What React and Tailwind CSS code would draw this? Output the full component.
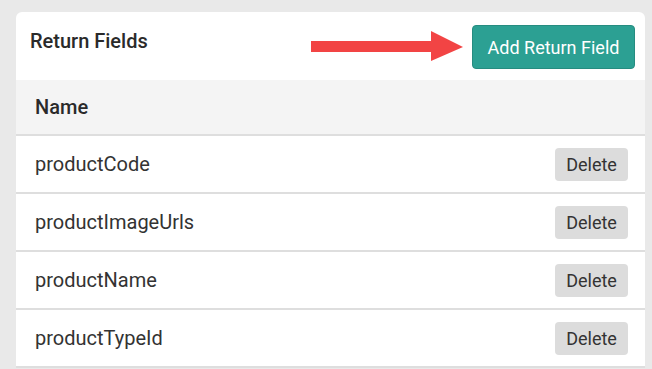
import React from 'react';

const fields = ['productCode', 'productImageUrls', 'productName', 'productTypeId'];

const Arrow = () => (
  <svg width="152" height="32" viewBox="0 0 152 32" className="block">
    <path d="M0 10 H120 V0 L152 16 L120 30 V21 H0 Z" fill="#f24444" />
  </svg>
);

export default function App() {
  return (
    <div className="min-h-screen bg-[#e9e9e9] pt-3 pl-4 font-['Roboto',sans-serif]">
      <div className="w-[629px] rounded-t-md bg-white overflow-hidden">
        {/* HEADER */}
        <div className="flex h-[68px] items-start justify-between pl-[14px] pr-[10px]">
          <h2 className="mt-[14px] text-[20px] font-medium text-[#2a2a2a]">Return Fields</h2>
          <div className="mt-[13px] flex items-center gap-[9px]">
            <Arrow />
            <button className="h-[44px] w-[163px] rounded-[4px] border border-[#268c80] bg-[#2ca093] text-[18px] text-white">
              Add Return Field
            </button>
          </div>
        </div>

        {/* TABLE */}
        <div className="flex h-[56px] items-center border-b-2 border-[#dedede] bg-[#f4f4f4] px-[19px]">
          <span className="text-[20px] font-medium text-[#2a2a2a]">Name</span>
        </div>
        {fields.map((f) => (
          <div
            key={f}
            className="flex h-[58px] items-center justify-between border-b-2 border-[#dedede] pl-[19px] pr-[17px]"
          >
            <span className="text-[20px] text-[#333]">{f}</span>
            <button className="h-[33px] w-[73px] rounded-[4px] bg-[#dcdcdc] text-[18px] text-[#333]">
              Delete
            </button>
          </div>
        ))}
      </div>
    </div>
  );
}
